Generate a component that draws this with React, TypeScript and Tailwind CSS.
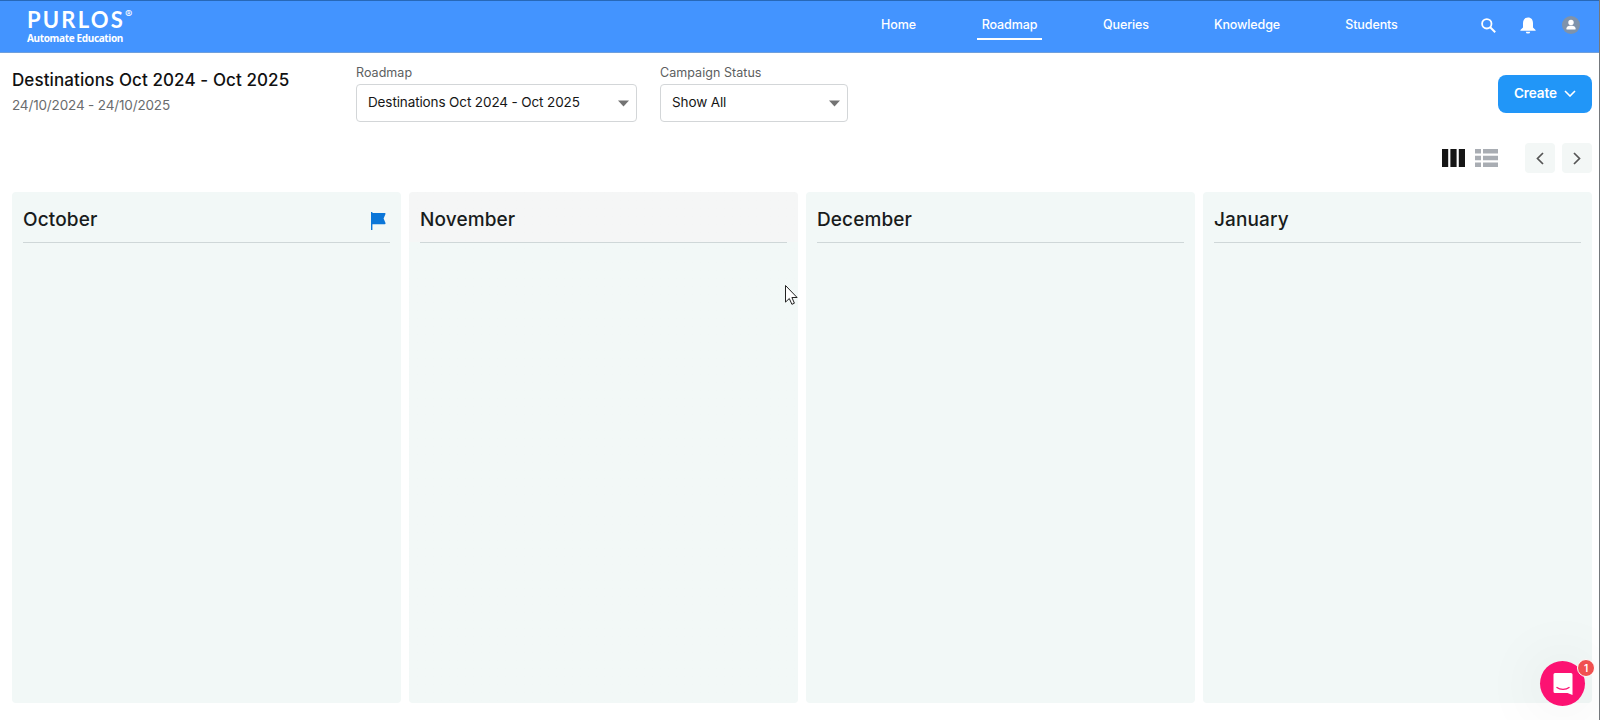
import type { ReactNode } from "react";
import clsx from "clsx";

type NavItem = {
  label: string;
  className: string;
};

const NAV_ITEMS: NavItem[] = [
  { label: "Home", className: "w-[35px]" },
  { label: "Roadmap", className: "w-[57px]" },
  { label: "Queries", className: "w-[46px]" },
  { label: "Knowledge", className: "w-[66px]" },
  { label: "Students", className: "w-[53px]" },
];

const MONTHS = ["October", "November", "December", "January"];

const Header = () => (
  <header className="flex h-[53px] shrink-0 items-start border-b border-t border-b-[#6f9fdc] border-t-[#2768b8] bg-[#4394ff] pl-[27px] pr-[18px] text-white">
    <div className="w-[110px] pt-[7px]">
      <div className="flex font-['Lato'] text-[22px] font-bold leading-[24px] tracking-[2.2px]">
        PURLOS
        <span className="font-['Inter'] text-[11px] font-normal leading-[13px] tracking-normal">
          ®
        </span>
      </div>
      <div className="whitespace-nowrap font-['Noto_Sans'] text-[10px] font-bold leading-[13px] tracking-[-0.35px]">
        Automate Education
      </div>
    </div>
    <nav className="ml-auto flex gap-[65px] text-[12.5px] font-medium leading-[18px] tracking-[-0.1px]">
      {NAV_ITEMS.map((item) => (
        <div key={item.label} className={clsx("flex justify-center", item.className)}>
          <div
            className={clsx(
              "mt-[15px] h-[24px] shrink-0 whitespace-nowrap",
              item.label === "Roadmap" &&
                "flex w-[65px] justify-center border-b-2 border-white",
            )}
          >
            {item.label}
          </div>
        </div>
      ))}
    </nav>
    <div className="ml-[83px] flex items-start">
      <svg className="mt-[17px]" width="15" height="15" viewBox="0 0 15 15" fill="none">
        <circle cx="5.8" cy="5.8" r="4.7" stroke="white" strokeWidth="1.8" />
        <path d="M9.2 9.2L14.2 14.2" stroke="white" strokeWidth="2" />
      </svg>
      <svg className="ml-[24px] mt-[16px]" width="16" height="17" viewBox="0 0 16 17" fill="white">
        <path d="M8 .6c3.4 0 5 2.4 5 5.6v4.3l2.6 2.4v.9H.4v-.9L3 10.5V6.2C3 3 4.6.6 8 .6z" />
        <path d="M5.8 14.7h4.4a2.2 1.9 0 0 1-4.4 0z" />
      </svg>
      <svg className="ml-[25px] mt-[14px]" width="20" height="20" viewBox="0 0 20 20">
        <circle cx="10" cy="10" r="9" fill="#7f93ab" />
        <circle cx="10" cy="7.5" r="2.7" fill="white" />
        <path d="M5.5 14.5v-1.3c0-1.9 2.4-2.5 4.5-2.5s4.5.6 4.5 2.5v1.3z" fill="white" />
      </svg>
    </div>
  </header>
);

type SelectProps = {
  label: string;
  className: string;
  children: ReactNode;
};

const Select = ({ label, className, children }: SelectProps) => (
  <div className={className}>
    <div className="text-[12.5px] leading-[16px] tracking-[0.05px] text-[#5c5e60]">{label}</div>
    <div className="mt-[3px] flex h-[38px] items-center justify-between rounded border border-[#d3d6d8] pl-[11px] pr-[7px] text-[13.5px] tracking-[-0.12px] text-[#161616]">
      {children}
      <svg width="11" height="7" viewBox="0 0 11 7" fill="#737373">
        <path d="M0 .5h11L5.5 6.5z" />
      </svg>
    </div>
  </div>
);

const Toolbar = () => (
  <div className="flex h-[90px] shrink-0 pl-[12px] pr-[7px]">
    <div className="w-[344px] pt-[15px]">
      <h1 className="text-[17px] font-medium leading-[24px] tracking-[0.1px] text-[#111]">
        Destinations Oct 2024 - Oct 2025
      </h1>
      <div className="mt-[3px] text-[13.5px] leading-[20px] tracking-[-0.15px] text-[#6a6c6e]">
        24/10/2024 - 24/10/2025
      </div>
    </div>
    <div className="flex gap-[23px] pt-[12px]">
      <Select label="Roadmap" className="w-[281px]">
        <span className="pb-px">Destinations Oct 2024 - Oct 2025</span>
      </Select>
      <Select label="Campaign Status" className="w-[188px]">
        <span className="pb-px">Show All</span>
      </Select>
    </div>
    <button className="ml-auto mt-[22px] flex h-[38px] w-[94px] items-center justify-between rounded-lg bg-[#2196f8] px-[16px] pb-[2px] text-[13.5px] font-semibold tracking-[-0.1px] text-white">
      Create
      <svg className="mt-px" width="12" height="7" viewBox="0 0 12 7" fill="none">
        <path d="M1 1l5 5 5-5" stroke="white" strokeWidth="1.6" />
      </svg>
    </button>
  </div>
);

const ViewControls = () => (
  <div className="flex h-[49px] shrink-0 justify-end pr-[7px]">
    <svg className="mt-[6px]" width="23" height="18" viewBox="0 0 23 18" fill="#151515">
      <path d="M0 0h6.2v18H0zM8.4 0h6.2v18H8.4zM16.8 0H23v18h-6.2z" />
    </svg>
    <svg className="ml-[10px] mt-[6px]" width="23" height="18" viewBox="0 0 23 18" fill="#a9adb3">
      <path d="M0 0h6v4.6H0zM8 0h15v4.6H8zM0 6.7h6v4.6H0zM8 6.7h15v4.6H8zM0 13.4h6V18H0zM8 13.4h15V18H8z" />
    </svg>
    <button className="ml-[27px] flex size-[30px] items-center justify-center rounded bg-[#f3f7f6]">
      <svg width="8" height="13" viewBox="0 0 8 13" fill="none">
        <path d="M7 1L1.5 6.5 7 12" stroke="#555" strokeWidth="1.7" />
      </svg>
    </button>
    <button className="ml-[7px] flex size-[30px] items-center justify-center rounded bg-[#f3f7f6]">
      <svg width="8" height="13" viewBox="0 0 8 13" fill="none">
        <path d="M1 1l5.5 5.5L1 12" stroke="#555" strokeWidth="1.7" />
      </svg>
    </button>
  </div>
);

const MonthColumn = ({ month }: { month: string }) => (
  <section
    className={clsx(
      "rounded bg-[#f2f8f7] px-[11px]",
      month === "November" && "bg-linear-to-b from-[#f5f6f6] from-[50px] to-[#f2f8f7] to-[50px]",
    )}
  >
    <div className="flex h-[51px] items-start justify-between border-b border-[#cfd7d8] pr-[4px]">
      <h2 className="mt-[15px] text-[19px] font-medium leading-[26px] tracking-[0.12px] text-[#191c1c]">
        {month}
      </h2>
      {month === "October" && (
        <svg className="mt-[20px]" width="15" height="18" viewBox="0 0 15 18" fill="#0b76d8">
          <path d="M0 0h1.4v1h12.2q1.4 0 .8 1.3L12.6 6.5l1.8 4.2q.6 1.5-.8 1.5H1.4V18H0z" />
        </svg>
      )}
    </div>
  </section>
);

const App = () => (
  <div className="relative flex h-[720px] w-[1600px] flex-col overflow-hidden border-r border-[#74787c] bg-white font-['Inter',sans-serif]">
    <Header />
    <Toolbar />
    <ViewControls />
    <main className="grid h-[511px] grid-cols-4 gap-[8px] pl-[12px] pr-[7px]">
      {MONTHS.map((month) => (
        <MonthColumn key={month} month={month} />
      ))}
    </main>

    {/* mouse pointer */}
    <svg className="absolute left-[784px] top-[284px]" width="15" height="22" viewBox="0 0 15 22">
      <path
        d="M1.5 1.5v16.6l3.8-3.6 2.6 5.8 2.5-1.1-2.5-5.7h5.2z"
        fill="white"
        stroke="#222"
        strokeWidth="1"
      />
    </svg>

    {/* chat launcher */}
    <div className="absolute left-[1540px] top-[661px] flex size-[45px] items-center justify-center rounded-full bg-[#fc1272] shadow-[0_2px_60px_10px_rgba(0,0,0,0.05)]">
      <svg width="20" height="24" viewBox="0 0 20 24">
        <path d="M2 1h16a1.5 1.5 0 0 1 1.5 1.5V23l-5-2H2a1.5 1.5 0 0 1-1.5-1.5v-17A1.5 1.5 0 0 1 2 1z" fill="white" />
        <path d="M3.5 15.2c3.8 3 9.2 3 13 0" fill="none" stroke="#fc1272" strokeWidth="1.3" />
      </svg>
      <div className="absolute -top-[2px] left-[37px] flex size-[18px] items-center justify-center rounded-full border border-white bg-[#f05050] text-[10px] font-semibold text-white">
        1
      </div>
    </div>
  </div>
);

export default App;
